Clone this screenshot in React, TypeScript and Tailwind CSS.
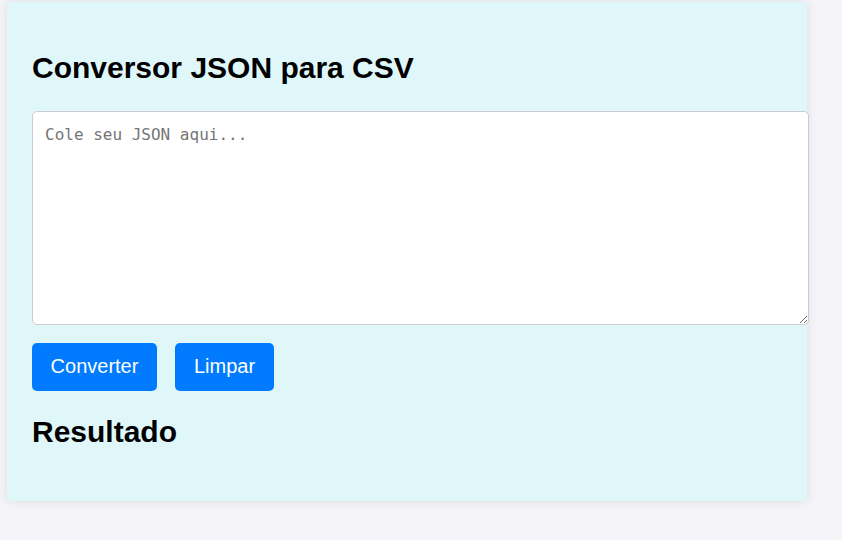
import React from "react";

export default function App() {
  return (
    <div className="min-h-[540px] w-full bg-[#f4f4f9] pt-[2px] pl-[7px]" style={{ fontFamily: '"Liberation Sans", Arial, sans-serif' }}>
      <div className="flex w-[800px] flex-col bg-[#e0f7fa] px-[25px] pb-[52px] shadow-[0_0_10px_rgba(0,0,0,0.1)]">
        <h1 className="mt-[49px] text-[30px] font-bold leading-[34px] text-black">Conversor JSON para CSV</h1>
        <textarea
          placeholder="Cole seu JSON aqui..."
          className="mt-[26px] h-[214px] w-[777px] rounded-[5px] border border-[#cccccc] bg-white px-[12px] pt-[13px] pb-[11px] text-[16px] leading-[19px] text-black placeholder:text-[#757575] focus:outline-none"
          style={{ fontFamily: '"DejaVu Sans Mono", monospace' }}
        />
        <div className="mt-[18px] flex gap-[18px]">
          <button className="h-[48px] w-[125px] rounded-[5px] bg-[#007bff] pb-[2px] text-[20px] text-white">Converter</button>
          <button className="h-[48px] w-[99px] rounded-[5px] bg-[#007bff] pb-[2px] text-[20px] text-white">Limpar</button>
        </div>
        <h2 className="mt-[24px] text-[30px] font-bold leading-[34px] text-black">Resultado</h2>
      </div>
    </div>
  );
}
